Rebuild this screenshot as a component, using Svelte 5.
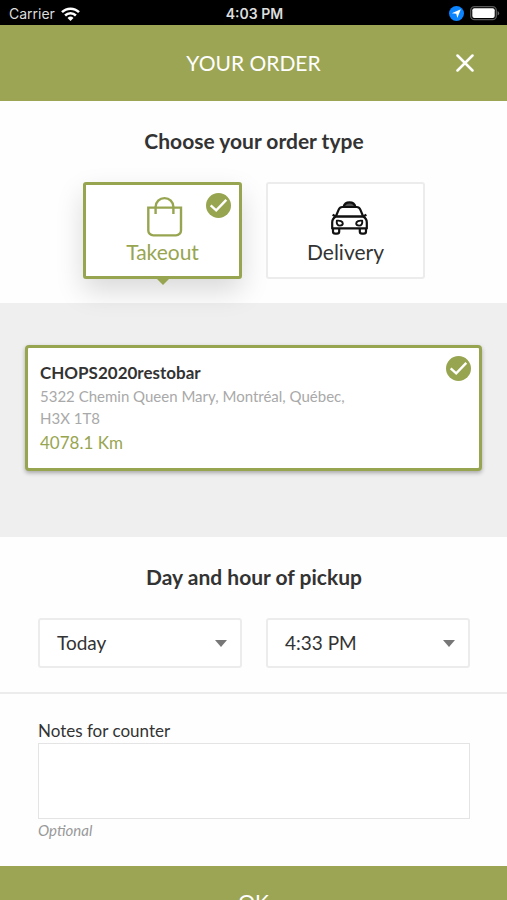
<script>
  const types = [
    { id: 'takeout', label: 'Takeout' },
    { id: 'delivery', label: 'Delivery' }
  ];
  let orderType = $state('takeout');
  let day = $state('Today');
  let hour = $state('4:33 PM');
  let notes = $state('');
</script>

{#snippet check()}
  <svg class="check" viewBox="0 0 24 24" aria-hidden="true">
    <circle cx="12" cy="12" r="12" fill="#98a550" />
    <path d="M4.500 11.800 9.800 16.600 19.500 6.600" fill="none" stroke="#fff" stroke-width="2.3" />
  </svg>
{/snippet}

<div class="screen">
  <div class="status">
    <div class="side">
      <span>Carrier</span>
      <svg width="19" height="14" viewBox="0 0 19 14" aria-hidden="true">
        <g fill="none" stroke="#fff" stroke-width="2.5">
          <path d="M1 5.2a12 12 0 0 1 17 0" />
          <path d="M4.1 8.5a7.6 7.6 0 0 1 10.8 0" />
        </g>
        <path d="M6.5 10.9a4.3 4.3 0 0 1 6 0l-3 3z" fill="#fff" />
      </svg>
    </div>
    <span class="clock">4:03 PM</span>
    <div class="side end">
      <svg width="15" height="15" viewBox="0 0 15 15" aria-hidden="true">
        <circle cx="7.5" cy="7.5" r="7.5" fill="#0a84ff" />
        <path d="M11.8 3.2 8.3 12 7.3 7.7 2.8 7.2z" fill="#fff" />
      </svg>
      <svg width="30" height="15" viewBox="0 0 30 15" aria-hidden="true">
        <rect x="0.7" y="0.7" width="25.6" height="13" rx="3.8" fill="none" stroke="#59595b" stroke-width="1.3" />
        <rect x="2.3" y="2.3" width="22.4" height="9.8" rx="2" fill="#fff" />
        <path d="M27.6 5a2.5 2.5 0 0 1 0 4.6z" fill="#69696b" />
      </svg>
    </div>
  </div>

  <header>
    <h1>YOUR ORDER</h1>
    <button class="close" aria-label="Close">
      <svg width="18" height="18" viewBox="0 0 18 18" aria-hidden="true">
        <path d="M1.5 1.5 16.5 16.5M16.5 1.5 1.5 16.5" stroke="#fff" stroke-width="2.5" stroke-linecap="round" />
      </svg>
    </button>
  </header>

  <section class="types">
    <h2>Choose your order type</h2>
    <div class="tiles">
      {#each types as type}
        <button
          class="tile"
          class:selected={orderType === type.id}
          aria-pressed={orderType === type.id}
          onclick={() => (orderType = type.id)}
        >
          {#if type.id === 'takeout'}
            <svg width="48" height="42" viewBox="0 0 48 42" fill="none" stroke="currentColor" stroke-width="2.4" aria-hidden="true">
              <path d="M9.300 12.600H42V35.400a5 5 0 0 1-5 5H14.300a5 5 0 0 1-5-5z" />
              <path d="M16.600 19V12a8.900 8.900 0 0 1 17.800 0V19" />
            </svg>
          {:else}
            <svg width="48" height="42" viewBox="0 0 48 42" fill="none" stroke="#111" stroke-width="2.2" stroke-linejoin="round" aria-hidden="true">
              <path d="M21.500 12c.8-3 3.200-4.600 6-4.600s5.200 1.600 6 4.600z" fill="#555" />
              <path d="M13.800 21.500 16.800 14.400q1-2.400 3.500-2.400h14.400q2.500 0 3.500 2.400l3 7.100z" />
              <path d="M13.800 21.500Q10.200 23.600 10.200 27.500v5.900h34.600v-5.900q0-3.900-3.600-6z" />
              <path d="M11 33.400v3q0 2.200 2.200 2.200h1.800q2.200 0 2.200-2.200v-3M37.800 33.400v3q0 2.200 2.200 2.200h1.800q2.200 0 2.200-2.200v-3" />
              <path d="M10.600 19.700 13.400 21.200M44.400 19.700 41.600 21.200" />
              <path d="M14.800 25.800c3-.7 6 .7 6 2.700 0 1.400-1.300 2.100-2.900 2.100-2.500 0-3.500-2.100-3.100-4.800zM40.200 25.800c-3-.7-6 .7-6 2.700 0 1.400 1.300 2.100 2.900 2.100 2.500 0 3.500-2.100 3.100-4.800z" stroke-width="1.900" />
            </svg>
          {/if}
          <span>{type.label}</span>
          {#if orderType === type.id}{@render check()}{/if}
        </button>
      {/each}
    </div>
  </section>

  <section class="places">
    <button class="place" aria-pressed="true">
      <strong>CHOPS2020restobar</strong>
      <span class="address">5322 Chemin Queen Mary, Montréal, Québec, H3X 1T8</span>
      <span class="distance">4078.1 Km</span>
      {@render check()}
    </button>
  </section>

  <section class="pickup">
    <h2>Day and hour of pickup</h2>
    <div class="selects">
      <select aria-label="Day" bind:value={day}>
        <option>Today</option>
      </select>
      <select aria-label="Hour" bind:value={hour}>
        <option>4:33 PM</option>
      </select>
    </div>
  </section>

  <section class="notes">
    <label for="notes">Notes for counter</label>
    <textarea id="notes" aria-describedby="notes-hint" bind:value={notes}></textarea>
    <small id="notes-hint">Optional</small>
  </section>

  <button class="ok">OK</button>
</div>

<style>
  :global(body) {
    margin: 0;
    background: #fff;
  }
  .screen {
    height: 100vh;
    display: flex;
    flex-direction: column;
    overflow: hidden;
    font-family: Lato, 'Liberation Sans', sans-serif;
    color: #333;
    background: #fefefe;
  }
  .screen > * {
    flex-shrink: 0;
  }
  button,
  select,
  textarea {
    box-sizing: border-box;
    margin: 0;
    font-family: inherit;
    color: inherit;
  }
  svg {
    display: block;
  }
  .status {
    display: grid;
    grid-template-columns: 1fr auto 1fr;
    align-items: center;
    height: 25px;
    padding: 2px 7px 0 9px;
    box-sizing: border-box;
    background: #000;
    color: #ddd;
    font: 14px/20px Inter, Roboto, sans-serif;
  }
  .side {
    display: flex;
    align-items: center;
    gap: 6px;
  }
  .end {
    justify-content: flex-end;
  }
  .clock {
    font-weight: 600;
  }
  header {
    display: grid;
    grid-template-columns: 1fr auto 1fr;
    align-items: center;
    height: 76px;
    background: #9ca554;
    color: #fff;
  }
  h1 {
    grid-column: 2;
    margin: 0;
    font-size: 21px;
    line-height: 28px;
    font-weight: 400;
  }
  .close {
    justify-self: end;
    margin-right: 24px;
    padding: 9px;
    border: 0;
    background: none;
  }
  h2 {
    margin: 0;
    font-size: 21px;
    line-height: 28px;
    font-weight: 700;
    text-align: center;
  }
  .types {
    padding: 26px 82px 24px 83px;
  }
  .tiles {
    display: grid;
    grid-template-columns: 1fr 1fr;
    gap: 24px;
    margin-top: 27px;
  }
  .tile {
    position: relative;
    display: flex;
    flex-direction: column;
    align-items: center;
    height: 97px;
    padding: 11px 0 0;
    border: 2px solid #ececec;
    border-radius: 3px;
    background: #fff;
    font-size: 21px;
    line-height: 28px;
  }
  .tile span {
    margin-top: 1px;
  }
  .tile.selected {
    border-color: #98a550;
    border-width: 3px;
    padding-top: 10px;
    color: #98a550;
    box-shadow: 0 12px 28px rgba(0, 0, 0, 0.15);
  }
  .tile.selected::after {
    content: '';
    position: absolute;
    top: 100%;
    left: 50%;
    margin-left: -7px;
    border: 7px solid transparent;
    border-top-color: #98a550;
    border-bottom: 0;
    margin-top: 2px;
  }
  .check {
    position: absolute;
    top: 8px;
    right: 8px;
    width: 25px;
    height: 25px;
  }
  .places {
    min-height: 234px;
    padding: 42px 25px;
    box-sizing: border-box;
    background: #efefef;
  }
  .place {
    position: relative;
    display: flex;
    flex-direction: column;
    align-items: flex-start;
    width: 100%;
    min-height: 126px;
    padding: 13px 130px 13px 12px;
    border: 3px solid #98a550;
    border-radius: 4px;
    background: #fff;
    box-shadow: 0 2px 4px rgba(0, 0, 0, 0.3);
    text-align: left;
  }
  .place strong {
    font-size: 17px;
    line-height: 24px;
  }
  .address {
    font-size: 15px;
    line-height: 22px;
    color: #a9a9a9;
  }
  .distance {
    margin-top: 2px;
    font-size: 17px;
    line-height: 24px;
    color: #98a550;
  }
  .pickup {
    padding: 26px 37px 24px 38px;
    border-bottom: 2px solid #ececec;
  }
  .selects {
    display: grid;
    grid-template-columns: 1fr 1fr;
    gap: 24px;
    margin-top: 27px;
  }
  select {
    appearance: none;
    height: 50px;
    padding: 0 40px 2px 17px;
    border: 2px solid #ececec;
    border-radius: 3px;
    background: #fff
      url("data:image/svg+xml,%3Csvg xmlns='http://www.w3.org/2000/svg' width='12' height='7'%3E%3Cpath d='M0 0h12L6 7z' fill='%23777'/%3E%3C/svg%3E")
      no-repeat right 13px center;
    font-size: 19px;
  }
  .notes {
    display: flex;
    flex-direction: column;
    padding: 25px 37px;
  }
  .notes {
    padding-left: 38px;
  }
  .notes label {
    font-size: 17px;
    line-height: 24px;
  }
  textarea {
    width: 100%;
    height: 76px;
    padding: 8px;
    border: 1px solid #e4e4e4;
    background: #fff;
    font-size: 15px;
    resize: none;
  }
  small {
    font-size: 15px;
    line-height: 22px;
    font-style: italic;
    color: #999;
  }
  .ok {
    height: 72px;
    border: 0;
    background: #9ca554;
    color: #fff;
    font-size: 21px;
    line-height: 28px;
  }
</style>
